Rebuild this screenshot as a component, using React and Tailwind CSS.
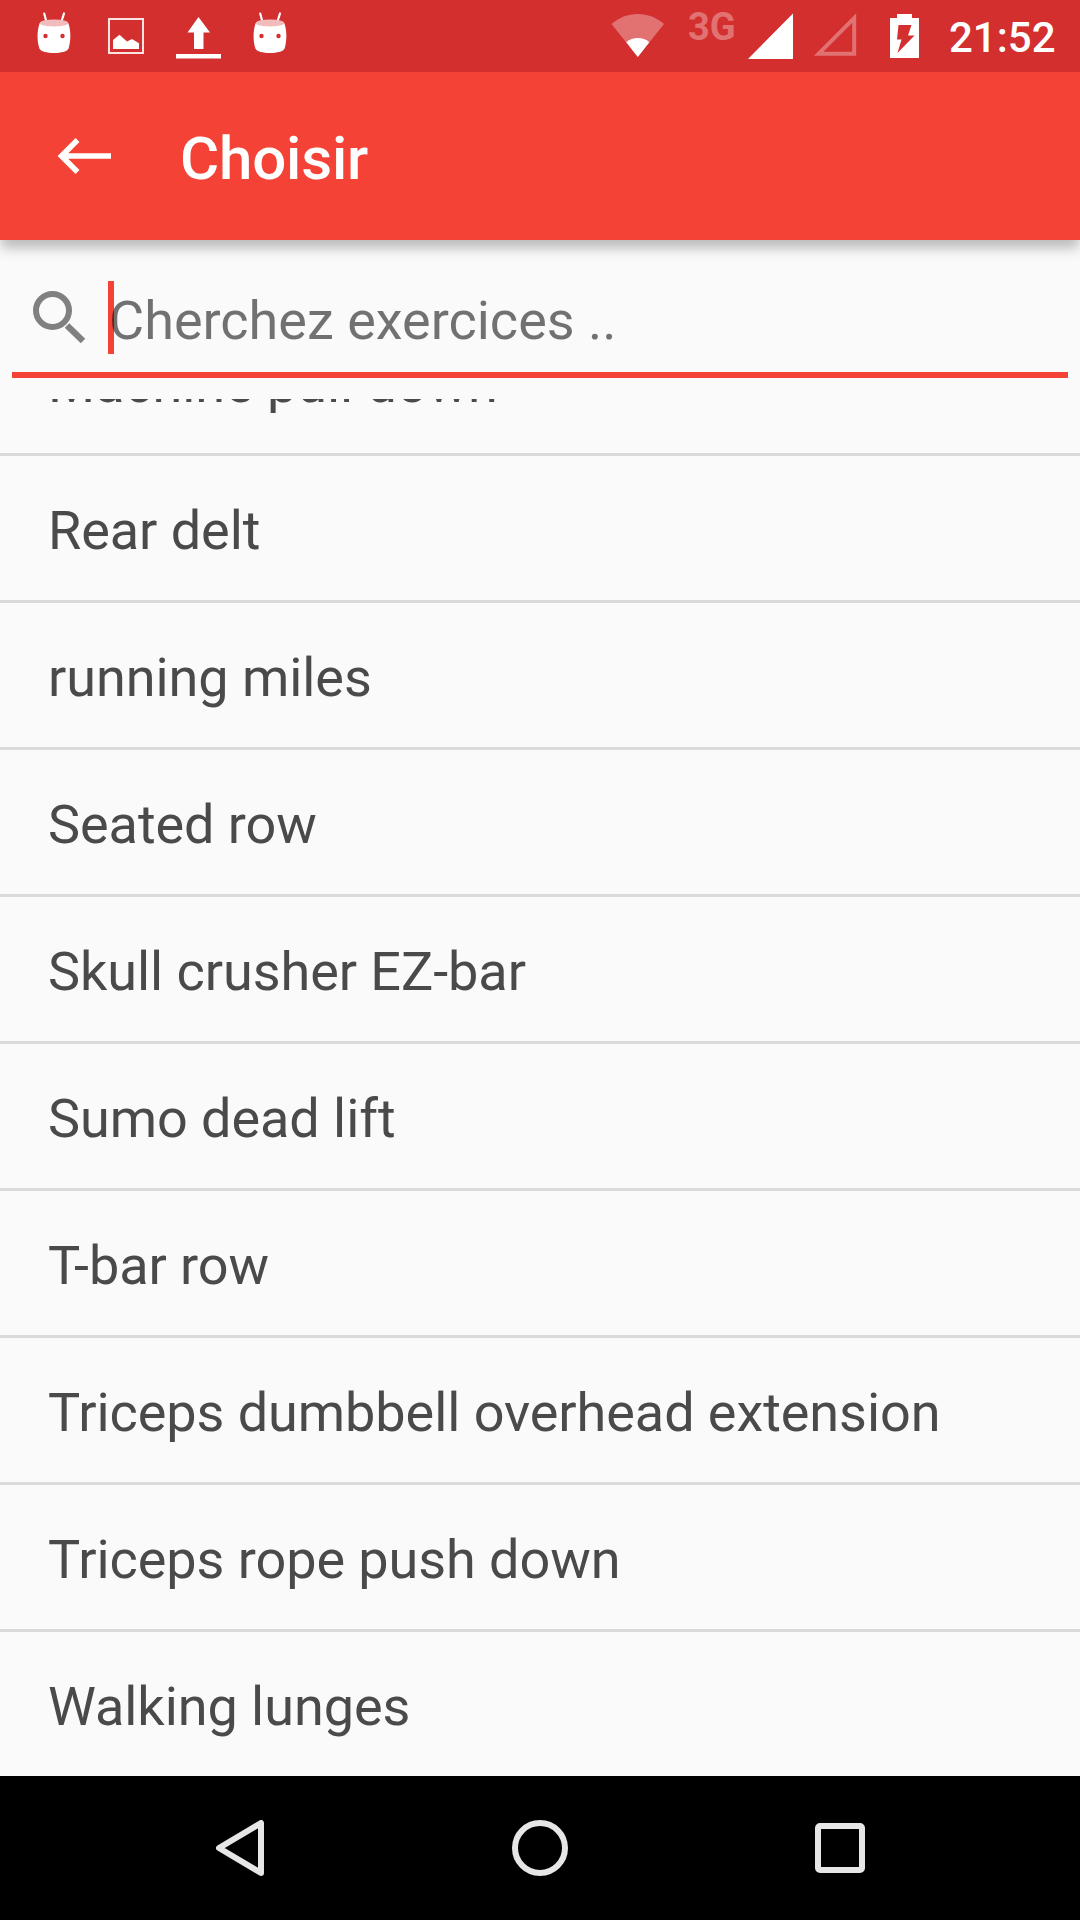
import { useState } from 'react'

const exercises = [
  'Machine pull down',
  'Rear delt',
  'running miles',
  'Seated row',
  'Skull crusher EZ-bar',
  'Sumo dead lift',
  'T-bar row',
  'Triceps dumbbell overhead extension',
  'Triceps rope push down',
  'Walking lunges',
]

function Marshmallow() {
  return (
    <svg className="w-9 h-[42px]" viewBox="0 0 36 42" fill="none">
      <path d="M8.2 1.5l2 7.5M28 1.5L25.6 9" stroke="#fff" strokeWidth="2.2" strokeLinecap="round" />
      <path d="M3.4 12c0-2 6-4 14.600-4s14.600 2 14.600 4c2.400 7 2.300 17 0 24.500C31.500 39.500 25 41 18 41S4.500 39.500 3.400 36.500C.9 29 1 19 3.400 12z" fill="#fff" />
      <ellipse cx="18" cy="11" rx="14.200" ry="3.600" fill="#f2bcbc" />
      <circle cx="9.500" cy="24" r="2.200" fill="#d32f2f" />
      <circle cx="26.500" cy="24" r="2.200" fill="#d32f2f" />
    </svg>
  )
}

function StatusBar() {
  return (
    <div className="relative z-20 h-[72px] bg-[#d32f2f] flex items-start text-white">
      <div className="flex items-start pl-9 pt-3 flex-1">
        <Marshmallow />
        <svg className="w-9 h-9 ml-9 mt-1.5" viewBox="0 0 36 36">
          <rect x="1" y="1" width="34" height="34" fill="none" stroke="#fbe3e3" strokeWidth="2" />
          <path d="M5 22l6.500-5.300 7.500 6.800 5-2.500 7 4.200V31H5z" fill="#fff" />
        </svg>
        <svg className="w-[46px] h-[44px] ml-8 mt-1" viewBox="0 0 46 44">
          <path d="M22.500 1l11.500 15.600h-6.500V33h-9.500V16.600h-6.500zM0 38h45v4.500H0z" fill="#fff" />
        </svg>
        <div className="ml-[30px]"><Marshmallow /></div>
      </div>
      <svg className="w-[54px] h-[46px] mt-3" viewBox="0 0 54 46">
        <path d="M.5 12C8 5.500 17 2 26.800 2S45.500 5.500 53 12L26.800 45z" fill="#e27272" />
        <path d="M15.300 30.200c3.500-3 7-4.200 11.500-4.200s8 1.200 11.500 4.200L26.800 45z" fill="#fff" />
      </svg>
      <span className="ml-[23px] mt-2 w-[50px] font-bold text-[38px] leading-[38px] text-[#e27272]">3G</span>
      <svg className="w-[46px] h-[47px] ml-[10px] mt-3" viewBox="0 0 46 47">
        <path d="M0 47L45 1.500V47z" fill="#fff" />
      </svg>
      <svg className="w-[43px] h-[44px] ml-5 mt-3" viewBox="0 0 43 44">
        <path d="M4.500 41.800L40.200 6v35.800z" fill="none" stroke="#e27272" strokeWidth="4" />
      </svg>
      <svg className="w-[30px] h-[45px] ml-[33px] mt-[13px]" viewBox="0 0 30 45">
        <path d="M0 5h7V1h15v4h7v40H0z" fill="#fff" />
        <path d="M8.500 12h13l-3.500 10.500h6.500L7.500 40l4-13.500H7z" fill="#d32f2f" />
      </svg>
      <span className="ml-[29px] mt-[14px] w-[131px] font-medium text-[42px] leading-[48px]">21:52</span>
    </div>
  )
}

function Toolbar() {
  return (
    <header className="relative z-10 h-[168px] bg-[#f44336] flex items-center shadow-[0_9px_12px_-1px_rgba(0,0,0,0.26)]">
      <svg className="w-[55px] h-9 ml-[57px]" viewBox="0 0 55 36">
        <path d="M20.500 2L4.500 18l16 16M3 18h51" fill="none" stroke="#fff" strokeWidth="5.500" />
      </svg>
      <h1 className="ml-[68px] mt-1.5 text-[60px] leading-[70px] font-medium tracking-[-0.15px] text-white">Choisir</h1>
    </header>
  )
}

function SearchField({ value, onChange }) {
  return (
    <div className="mx-3 h-[138px] border-b-[6px] border-[#f44336] flex items-start shrink-0">
      <svg className="w-[54px] h-[54px] ml-5 mt-[50px]" viewBox="0 0 54 54">
        <circle cx="20.500" cy="20.500" r="16.500" fill="none" stroke="#808080" strokeWidth="6" />
        <path d="M35 35.500L51 51" stroke="#808080" strokeWidth="6.500" />
      </svg>
      <label className="relative flex-1 ml-[22px] mt-[41px]">
        <span className="absolute left-0 top-0 w-1.5 h-[73px] bg-[#f44336]" />
        <input
          value={value}
          onChange={e => onChange(e.target.value)}
          placeholder="Cherchez exercices .."
          className="relative block w-full h-[73px] pt-[5px] pl-px bg-transparent outline-none text-[54px] text-black/85 placeholder:text-black/55"
        />
      </label>
    </div>
  )
}

function NavBar() {
  return (
    <nav className="h-36 bg-black flex items-center">
      <svg className="w-12 h-14 ml-[216px]" viewBox="0 0 48 56">
        <path d="M45 3v50L3 28z" fill="none" stroke="#e6e6e6" strokeWidth="6" strokeLinejoin="round" />
      </svg>
      <div className="w-14 h-14 ml-[248px] rounded-full border-[6px] border-[#e6e6e6]" />
      <div className="w-[50px] h-[50px] ml-[247px] rounded-[5px] border-[6px] border-[#e6e6e6]" />
    </nav>
  )
}

export default function App() {
  const [search, setSearch] = useState('')
  const filtered = exercises.filter(e => e.toLowerCase().includes(search.toLowerCase()))

  return (
    <div className="w-[1080px] h-[1920px] flex flex-col overflow-hidden bg-[#fafafa] font-['Roboto',sans-serif]">
      <StatusBar />
      <Toolbar />
      <main className="flex-1 min-h-0 flex flex-col">
        <SearchField value={search} onChange={setSearch} />
        <div className="flex-1 min-h-0 mt-[21px] overflow-hidden">
          <ul className="-mt-[90px] divide-y-[3px] divide-[#dadada]">
            {filtered.map(e => (
              <li key={e} className="box-content h-36 pl-12 flex items-center text-[54px] tracking-[-0.06px] text-[#4a4a4a]">
                <span className="pt-1">{e}</span>
              </li>
            ))}
          </ul>
        </div>
      </main>
      <NavBar />
    </div>
  )
}
